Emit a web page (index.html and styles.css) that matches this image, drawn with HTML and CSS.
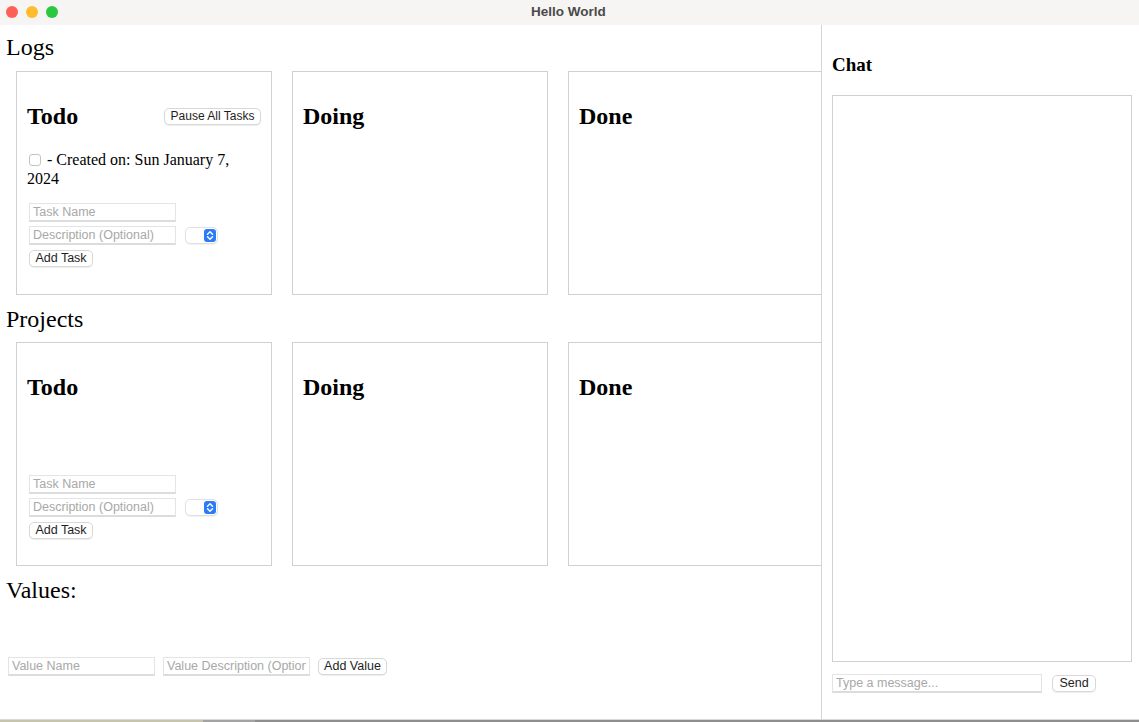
FILE: index.html
```html
<!DOCTYPE html>
<html>
<head>
<meta charset="utf-8">
<title>Hello World</title>
<link rel="stylesheet" href="styles.css">
</head>
<body>
<div class="titlebar">
  <div class="lights">
    <span class="light red"></span>
    <span class="light yellow"></span>
    <span class="light green"></span>
  </div>
  <div class="title">Hello World</div>
</div>
<div class="app">
  <main class="left">
    <h1 class="section-title">Logs</h1>
    <div class="boards">
      <div class="board">
        <div class="board-head">
          <h2>Todo</h2>
          <button class="btn btn-pause">Pause All Tasks</button>
        </div>
        <div class="tasks">
          <div class="task"><span class="check"></span> - Created on: Sun January 7, 2024</div>
        </div>
        <div class="task-form">
          <input class="field" type="text" placeholder="Task Name">
          <div class="form-row">
            <input class="field" type="text" placeholder="Description (Optional)">
            <div class="select">
              <span class="select-arrow">
                <svg width="12" height="13" viewBox="0 0 12 13"><path d="M3.5 5.2 6 2.8 8.5 5.2M3.5 7.8 6 10.2 8.5 7.8" fill="none" stroke="#fff" stroke-width="1.4" stroke-linecap="round" stroke-linejoin="round"/></svg>
              </span>
            </div>
          </div>
          <button class="btn btn-add">Add Task</button>
        </div>
      </div>
      <div class="board">
        <div class="board-head"><h2>Doing</h2></div>
      </div>
      <div class="board">
        <div class="board-head"><h2>Done</h2></div>
      </div>
    </div>

    <h1 class="section-title">Projects</h1>
    <div class="boards">
      <div class="board">
        <div class="board-head"><h2>Todo</h2></div>
        <div class="tasks"></div>
        <div class="task-form">
          <input class="field" type="text" placeholder="Task Name">
          <div class="form-row">
            <input class="field" type="text" placeholder="Description (Optional)">
            <div class="select">
              <span class="select-arrow">
                <svg width="12" height="13" viewBox="0 0 12 13"><path d="M3.5 5.2 6 2.8 8.5 5.2M3.5 7.8 6 10.2 8.5 7.8" fill="none" stroke="#fff" stroke-width="1.4" stroke-linecap="round" stroke-linejoin="round"/></svg>
              </span>
            </div>
          </div>
          <button class="btn btn-add">Add Task</button>
        </div>
      </div>
      <div class="board">
        <div class="board-head"><h2>Doing</h2></div>
      </div>
      <div class="board">
        <div class="board-head"><h2>Done</h2></div>
      </div>
    </div>

    <h1 class="section-title">Values:</h1>
    <div class="values-row">
      <input class="field" type="text" placeholder="Value Name">
      <input class="field" type="text" placeholder="Value Description (Optional)">
      <button class="btn btn-value">Add Value</button>
    </div>
  </main>
  <aside class="chat">
    <h3 class="chat-title">Chat</h3>
    <div class="chat-box"></div>
    <div class="chat-row">
      <input class="field chat-input" type="text" placeholder="Type a message...">
      <button class="btn btn-send">Send</button>
    </div>
  </aside>
</div>
<div class="bottom-edge"></div>
</body>
</html>
```

FILE: styles.css
```css
* { box-sizing: border-box; }

html, body {
  margin: 0;
  padding: 0;
  height: 722px;
  overflow: hidden;
  background: #ffffff;
  font-family: "Liberation Serif", "Times New Roman", serif;
  color: #000;
}

.titlebar {
  height: 25px;
  background: #f7f5f3;
  display: flex;
  align-items: center;
  padding-bottom: 3px;
}

.lights {
  display: flex;
  gap: 8px;
  padding-left: 6px;
  padding-top: 1px;
}

.light {
  width: 12px;
  height: 12px;
  border-radius: 50%;
  display: block;
}
.red { background: #fe5f57; }
.yellow { background: #febc2e; }
.green { background: #28c840; }

.title {
  flex: 1;
  text-align: center;
  font-family: "Liberation Sans", Arial, sans-serif;
  font-weight: bold;
  font-size: 13.5px;
  color: #4a4a4a;
  margin-left: -60px;
}

.app {
  display: flex;
  height: 694px;
}

.left {
  width: 822px;
  flex-shrink: 0;
  border-right: 1px solid #d5d5d5;
  overflow: hidden;
  padding-top: 9px;
}

.section-title {
  font-size: 24px;
  font-weight: normal;
  margin: 0;
  padding-left: 6px;
  line-height: 27.6px;
}

.boards {
  display: flex;
  gap: 20px;
  padding-left: 16px;
  margin: 9px 0 11px;
}

.board {
  width: 256px;
  height: 224px;
  flex-shrink: 0;
  border: 1px solid #d0d0d0;
  padding: 0 10px 10px 10px;
}

.board-head {
  display: flex;
  justify-content: space-between;
  align-items: center;
  padding-top: 31px;
}

.board-head h2 {
  font-size: 24px;
  font-weight: bold;
  margin: 0;
  line-height: 27.6px;
}

.tasks {
  height: 73px;
  padding-top: 21px;
}

.task {
  font-size: 16px;
  line-height: 18.4px;
}

.check {
  display: inline-block;
  width: 12px;
  height: 12px;
  border: 1px solid #c4c4c4;
  border-radius: 3px;
  background: #fff;
  margin: 0 2px 0 2px;
  vertical-align: -1px;
}

.task-form {
  display: flex;
  flex-direction: column;
  align-items: flex-start;
  gap: 4px;
  padding-left: 2px;
}

.form-row {
  display: flex;
  align-items: center;
}

.field {
  width: 147px;
  height: 19px;
  border: 1px solid #e4e4e4;
  border-bottom: 2px solid #dcdcdc;
  background: #fff;
  padding: 0 3px;
  font-family: "Liberation Sans", Arial, sans-serif;
  font-size: 12.5px;
  color: #222;
  outline: none;
}
.field::placeholder { color: #a8a8a8; }

.select {
  width: 33px;
  height: 17px;
  margin-left: 9px;
  border: 1px solid #e0e0e0;
  border-radius: 5px;
  background: #fff;
  box-shadow: 0 1px 1px rgba(0,0,0,0.06);
  display: flex;
  justify-content: flex-end;
  align-items: center;
  padding-right: 1px;
}

.select-arrow {
  width: 12px;
  height: 13px;
  border-radius: 3px;
  background: #2b7cf6;
  display: flex;
}

.btn {
  height: 17px;
  border: 1px solid #d8d8d8;
  border-radius: 5px;
  background: #fff;
  box-shadow: 0 1px 1px rgba(0,0,0,0.07);
  font-family: "Liberation Sans", Arial, sans-serif;
  font-size: 12.5px;
  color: #1e1e1e;
  padding: 0;
  line-height: 15px;
}

.btn-pause { width: 97px; font-size: 12px; }
.btn-add { width: 64px; margin-top: 1px; }
.btn-value { width: 69px; }
.btn-send { width: 44px; margin-left: 10px; }

.values-row {
  display: flex;
  align-items: center;
  gap: 8px;
  padding-left: 8px;
  margin-top: 52px;
}

.chat {
  flex: 1;
  padding: 10px 7px 0 10px;
}

.chat-title {
  font-size: 19px;
  font-weight: bold;
  margin: 19px 0 19px;
  line-height: 22px;
}

.chat-box {
  width: 300px;
  height: 567px;
  border: 1px solid #d0d0d0;
}

.chat-row {
  display: flex;
  align-items: center;
  margin-top: 12px;
}

.chat-input { width: 210px; }

.bottom-edge {
  height: 3px;
  background: linear-gradient(to right, #c6c4ac 0, #c6c4ac 203px, #a3a3a3 203px, #a3a3a3 255px, #8e8e8e 255px);
  border-top: 1px solid #d9d9d9;
}
```
